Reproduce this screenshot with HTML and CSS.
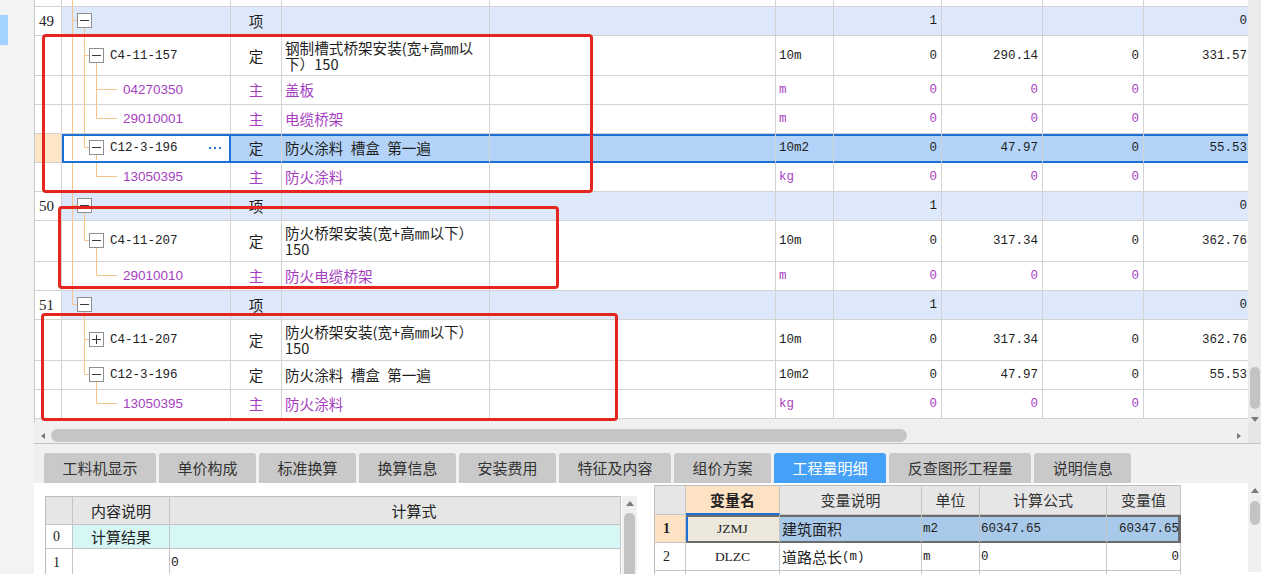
FILE: index.html
```html
<!DOCTYPE html>
<html lang="zh-CN">
<head>
<meta charset="utf-8">
<title>工程量明细</title>
<link rel="stylesheet" href="styles.css">
</head>
<body>
<div class="app">
  <aside class="side"><div class="side-sel"></div></aside>
  <main class="main">
    <section class="upper">
      <div class="grid">
        <div class="row part">
          <div class="rn"></div>
          <div class="tc"><svg class="tree" width="32" height="6"><path d="M10.5 0V7"/></svg></div>
          <div></div><div></div><div></div><div></div><div></div><div></div><div></div><div></div>
        </div>

        <div class="row grp">
          <div class="rn">49</div>
          <div class="tc"><svg class="tree" width="32" height="28"><path d="M10.5 0V29M10.5 13.5H15M22.5 21V29"/><rect x="15.5" y="6.5" width="14" height="14"/><path class="sg" d="M18 13.5H27"/></svg></div>
          <div class="ty">项</div><div class="nm"></div><div></div><div class="un"></div>
          <div class="v">1</div><div class="v"></div><div class="v"></div><div class="v">0</div>
        </div>

        <div class="row tall">
          <div class="rn"></div>
          <div class="tc"><svg class="tree" width="47" height="39"><path d="M10.5 0V40M22.5 0V40M22.5 19.5H27M34.5 27V40"/><rect x="27.5" y="12.5" width="14" height="14"/><path class="sg" d="M30 19.5H39"/></svg><span class="code">C4-11-157</span></div>
          <div class="ty">定</div>
          <div class="nm two"><span class="ln">钢制槽式桥架安装(宽+高㎜以</span><span class="ln">下）150</span></div>
          <div></div><div class="un">10m</div>
          <div class="v">0</div><div class="v">290.14</div><div class="v">0</div><div class="v">331.57</div>
        </div>

        <div class="row pr">
          <div class="rn"></div>
          <div class="tc"><svg class="tree" width="59" height="28"><path d="M10.5 0V29M22.5 0V29M34.5 0V29M34.5 13.5H55"/></svg><span class="mcode">04270350</span></div>
          <div class="ty">主</div><div class="nm">盖板</div><div></div><div class="un">m</div>
          <div class="v">0</div><div class="v">0</div><div class="v">0</div><div class="v"></div>
        </div>

        <div class="row pr">
          <div class="rn"></div>
          <div class="tc"><svg class="tree" width="59" height="28"><path d="M10.5 0V29M22.5 0V29M34.5 0V13.5H55"/></svg><span class="mcode">29010001</span></div>
          <div class="ty">主</div><div class="nm">电缆桥架</div><div></div><div class="un">m</div>
          <div class="v">0</div><div class="v">0</div><div class="v">0</div><div class="v"></div>
        </div>

        <div class="row sel">
          <div class="rn"></div>
          <div class="tc"><svg class="tree" width="47" height="28"><path d="M10.5 2V26M22.5 2V13.5H27M34.5 21V26"/><rect x="27.5" y="6.5" width="14" height="14"/><path class="sg" d="M30 13.5H39"/></svg><span class="code">C12-3-196</span><svg class="dots" width="12" height="3"><rect x="0" y="0" width="2" height="2"/><rect x="5" y="0" width="2" height="2"/><rect x="10" y="0" width="2" height="2"/></svg></div>
          <div class="ty">定</div><div class="nm">防火涂料&ensp;槽盒&ensp;第一遍</div><div></div><div class="un">10m2</div>
          <div class="v">0</div><div class="v">47.97</div><div class="v">0</div><div class="v">55.53</div>
        </div>

        <div class="row pr">
          <div class="rn"></div>
          <div class="tc"><svg class="tree" width="59" height="28"><path d="M10.5 0V29M34.5 0V13.5H55"/></svg><span class="mcode">13050395</span></div>
          <div class="ty">主</div><div class="nm">防火涂料</div><div></div><div class="un">kg</div>
          <div class="v">0</div><div class="v">0</div><div class="v">0</div><div class="v"></div>
        </div>

        <div class="row grp">
          <div class="rn">50</div>
          <div class="tc"><svg class="tree" width="32" height="28"><path d="M10.5 0V29M10.5 13.5H15M22.5 21V29"/><rect x="15.5" y="6.5" width="14" height="14"/><path class="sg" d="M18 13.5H27"/></svg></div>
          <div class="ty">项</div><div class="nm"></div><div></div><div class="un"></div>
          <div class="v">1</div><div class="v"></div><div class="v"></div><div class="v">0</div>
        </div>

        <div class="row tall41">
          <div class="rn"></div>
          <div class="tc"><svg class="tree" width="47" height="40"><path d="M10.5 0V41M22.5 0V19.5H27M34.5 27V41"/><rect x="27.5" y="12.5" width="14" height="14"/><path class="sg" d="M30 19.5H39"/></svg><span class="code">C4-11-207</span></div>
          <div class="ty">定</div>
          <div class="nm two"><span class="ln">防火桥架安装(宽+高㎜以下）</span><span class="ln">150</span></div>
          <div></div><div class="un">10m</div>
          <div class="v">0</div><div class="v">317.34</div><div class="v">0</div><div class="v">362.76</div>
        </div>

        <div class="row pr">
          <div class="rn"></div>
          <div class="tc"><svg class="tree" width="59" height="28"><path d="M10.5 0V29M34.5 0V13.5H55"/></svg><span class="mcode">29010010</span></div>
          <div class="ty">主</div><div class="nm">防火电缆桥架</div><div></div><div class="un">m</div>
          <div class="v">0</div><div class="v">0</div><div class="v">0</div><div class="v"></div>
        </div>

        <div class="row grp">
          <div class="rn">51</div>
          <div class="tc"><svg class="tree" width="32" height="28"><path d="M10.5 0V13.5H15M22.5 21V29"/><rect x="15.5" y="6.5" width="14" height="14"/><path class="sg" d="M18 13.5H27"/></svg></div>
          <div class="ty">项</div><div class="nm"></div><div></div><div class="un"></div>
          <div class="v">1</div><div class="v"></div><div class="v"></div><div class="v">0</div>
        </div>

        <div class="row tall41">
          <div class="rn"></div>
          <div class="tc"><svg class="tree" width="47" height="40"><path d="M22.5 0V41M22.5 19.5H27"/><rect x="27.5" y="12.5" width="14" height="14"/><path class="sg" d="M30 19.5H39M34.5 15V24"/></svg><span class="code">C4-11-207</span></div>
          <div class="ty">定</div>
          <div class="nm two"><span class="ln">防火桥架安装(宽+高㎜以下）</span><span class="ln">150</span></div>
          <div></div><div class="un">10m</div>
          <div class="v">0</div><div class="v">317.34</div><div class="v">0</div><div class="v">362.76</div>
        </div>

        <div class="row">
          <div class="rn"></div>
          <div class="tc"><svg class="tree" width="47" height="28"><path d="M22.5 0V13.5H27M34.5 21V29"/><rect x="27.5" y="6.5" width="14" height="14"/><path class="sg" d="M30 13.5H39"/></svg><span class="code">C12-3-196</span></div>
          <div class="ty">定</div><div class="nm">防火涂料&ensp;槽盒&ensp;第一遍</div><div></div><div class="un">10m2</div>
          <div class="v">0</div><div class="v">47.97</div><div class="v">0</div><div class="v">55.53</div>
        </div>

        <div class="row pr">
          <div class="rn"></div>
          <div class="tc"><svg class="tree" width="59" height="28"><path d="M34.5 0V13.5H55"/></svg><span class="mcode">13050395</span></div>
          <div class="ty">主</div><div class="nm">防火涂料</div><div></div><div class="un">kg</div>
          <div class="v">0</div><div class="v">0</div><div class="v">0</div><div class="v"></div>
        </div>

        <div class="grid-fill"></div>
      </div>
      <div class="vscroll"><div class="vthumb"></div><div class="arr-down"></div></div>
    </section>

    <div class="hscroll">
      <div class="htrack"><span class="arr-left"></span><span class="hthumb"></span><span class="arr-right"></span></div>
      <div class="hcorner"></div>
    </div>

    <nav class="tabs">
      <span class="tab">工料机显示</span>
      <span class="tab">单价构成</span>
      <span class="tab">标准换算</span>
      <span class="tab">换算信息</span>
      <span class="tab">安装费用</span>
      <span class="tab">特征及内容</span>
      <span class="tab">组价方案</span>
      <span class="tab active">工程量明细</span>
      <span class="tab">反查图形工程量</span>
      <span class="tab">说明信息</span>
    </nav>

    <section class="lower">
      <div class="lpanel">
        <div class="ltable">
          <div class="lrow lhd"><div></div><div class="c">内容说明</div><div class="c calc">计算式</div></div>
          <div class="lrow lr0"><div class="lrn">0</div><div class="c">计算结果</div><div></div></div>
          <div class="lrow lr1"><div class="lrn">1</div><div></div><div class="lv">0</div></div>
        </div>
        <div class="lscroll"><span class="arr-up"></span><span class="lthumb"></span></div>
      </div>

      <div class="rtable">
        <div class="rrow rhd"><div></div><div class="c vh">变量名</div><div class="c">变量说明</div><div class="c">单位</div><div class="c">计算公式</div><div class="c">变量值</div></div>
        <div class="rrow rsel"><div class="rrn b">1</div><div class="c vn">JZMJ</div><div class="t">建筑面积</div><div class="m">m2</div><div class="m">60347.65</div><div class="m r">60347.65</div></div>
        <div class="rrow"><div class="rrn">2</div><div class="c vn2">DLZC</div><div class="t">道路总长<span class="paren">(m)</span></div><div class="m">m</div><div class="m">0</div><div class="m r">0</div></div>
        <div class="rrow"><div></div><div></div><div></div><div></div><div></div><div></div></div>
      </div>
      <div class="rfill"></div>
      <div class="rscroll"><span class="arr-up"></span><span class="rthumb"></span></div>
    </section>
  </main>

  <div class="anno a1"></div>
  <div class="anno a2"></div>
  <div class="anno a3"></div>
</div>
</body>
</html>
```

FILE: styles.css
```css
* { box-sizing: border-box; margin: 0; padding: 0; }
html, body { width: 1261px; height: 574px; overflow: hidden; background: #fff; }
body { font-family: "Noto Sans CJK SC", "Noto Sans", sans-serif; font-size: 14.6px; color: #1e1e1e; }

.app { position: relative; display: flex; width: 1261px; height: 574px; }

.side { width: 34px; flex: none; background: #f3f3f3; padding-top: 15px; }
.side-sel { width: 8px; height: 30px; background: #a3d2ff; }

.main { flex: 1; display: flex; flex-direction: column; min-width: 0; }

/* ---------- upper grid ---------- */
.upper { display: flex; height: 423px; flex: none; }
.grid { width: 1214px; flex: none; border-left: 1px solid #c9c9c9; display: flex; flex-direction: column; background: #f0f0f0; }
.grid-fill { flex: 1; }

.row {
  display: grid;
  grid-template-columns: 27px 169px 51px 208px 286px 58px 108px 101px 101px 104px;
  height: 29px; flex: none; background: #fff;
}
.row > div {
  border-right: 1px solid #d3d3d3; border-bottom: 1px solid #d3d3d3;
  display: flex; align-items: center; overflow: hidden; white-space: nowrap; line-height: 16px;
}
.row > div:last-child { border-right: none; padding-right: 1px; }
.row.part { height: 7px; }
.row.tall { height: 40px; }
.row.tall41 { height: 41px; }
.row.grp { background: #dde9fa; }
.row.grp > .rn { background: #fff; }

.rn { padding-left: 4px; font-family: "Liberation Serif", serif; font-size: 15px; color: #222; }
.tc { align-items: stretch !important; overflow: visible !important; }
.tree { display: block; flex: none; overflow: visible; }
.tree path { fill: none; stroke: #f5c48a; stroke-width: 1; }
.tree rect { fill: #fff; stroke: #8f8f8f; stroke-width: 1; }
.tree path.sg { stroke: #3a3a3a; }
.code { align-self: center; margin-left: 1px; font-family: "Liberation Mono", monospace; font-size: 12.5px; color: #222; }
.mcode { align-self: center; margin-left: 2px; font-family: "Liberation Sans", sans-serif; font-size: 13.5px; color: #a63fbf; }
.dots { align-self: center; margin-left: auto; margin-right: 9px; flex: none; }
.dots rect { fill: #2b7bd9; }

.ty { justify-content: center; }
.nm { padding-left: 3px; }
.nm.two { flex-direction: column; align-items: flex-start !important; justify-content: center; }
.nm.two .ln { display: block; height: 16px; line-height: 16px; }
.un { padding-left: 3px; font-family: "Liberation Mono", monospace; font-size: 12.5px; }
.v { justify-content: flex-end; padding-right: 4px; font-family: "Liberation Mono", monospace; font-size: 12.5px; }

.row.pr > .ty, .row.pr > .nm, .row.pr > .un, .row.pr > .v { color: #a63fbf; }

.row.sel > div { background: #b3d4f8; box-shadow: inset 0 2px #1d6fd8, inset 0 -1px #1d6fd8; border-bottom-color: #1d6fd8; }
.row.sel > .rn { background: #fde5c8; box-shadow: none; border-bottom-color: #d3d3d3; }
.row.sel > .tc { background: #fff; border-right-color: #1d6fd8; box-shadow: inset 0 2px #1d6fd8, inset 0 -1px #1d6fd8, inset 2px 0 #1d6fd8, inset -1px 0 #1d6fd8; }

.vscroll { width: 13px; flex: none; background: #ebebeb; display: flex; flex-direction: column; align-items: center; padding-top: 367px; }
.vthumb { width: 10px; height: 42px; border-radius: 5px; background: #c3c3c3; }
.arr-down { margin-top: 8px; width: 0; height: 0; border-left: 4px solid transparent; border-right: 4px solid transparent; border-top: 5px solid #7a7a7a; }

/* ---------- horizontal scrollbar ---------- */
.hscroll { display: flex; height: 20px; flex: none; }
.htrack { flex: 1; display: flex; align-items: center; padding-top: 5px; background: #f0f0f0; }
.arr-left { margin-left: 7px; width: 0; height: 0; border-top: 3px solid transparent; border-bottom: 3px solid transparent; border-right: 4px solid #7a7a7a; }
.hthumb { margin-left: 6px; width: 856px; height: 13px; border-radius: 7px; background: #c5c5c5; }
.arr-right { margin-left: auto; margin-right: 7px; width: 0; height: 0; border-top: 3px solid transparent; border-bottom: 3px solid transparent; border-left: 4px solid #7a7a7a; }
.hcorner { width: 13px; flex: none; background: #e6e6e6; }

/* ---------- tabs ---------- */
.tabs { display: flex; gap: 3px; height: 40px; flex: none; padding: 9px 0 0 10px; border-top: 1px solid #c3c3c3; background: #f0f0f0; }
.tab { height: 30px; line-height: 30px; padding: 0 18.5px; background: #c9c9c9; color: #333; font-size: 15px; border-radius: 3px 3px 0 0; white-space: nowrap; }
.tab.active { background: #45a1f7; color: #fff; }

/* ---------- lower panels ---------- */
.lower { flex: 1; min-height: 0; display: flex; align-items: flex-start; padding-top: 2px; background: #fff; overflow: hidden; font-size: 15px; color: #222; }

.lpanel { display: flex; margin-left: 11px; margin-top: 11px; }
.ltable { width: 576px; border-left: 1px solid #bdbdbd; border-top: 1px solid #bdbdbd; }
.lrow { display: grid; grid-template-columns: 27px 97px 451px; height: 28px; }
.lrow > div { border-right: 1px solid #c4c4c4; border-bottom: 1px solid #c4c4c4; display: flex; align-items: center; white-space: nowrap; overflow: hidden; line-height: 18px; }
.lrow.lr0 { height: 24px; }
.lhd > div { background: #e6e6e6; }
.lr0 > div { background: #d7f6f6; }
.lr0 > .lrn { background: #fff; }
.lrn { padding-left: 7px; font-family: "Liberation Serif", serif; font-size: 14px; }
.c { justify-content: center; }
.lhd .calc { padding-left: 38px; }
.lv { padding-left: 1px; font-family: "Liberation Mono", monospace; font-size: 13px; }

.lscroll { width: 15px; height: 90px; margin-left: 1px; background: #f0f0f0; display: flex; flex-direction: column; align-items: center; padding-top: 5px; }
.arr-up { width: 0; height: 0; border-left: 4px solid transparent; border-right: 4px solid transparent; border-bottom: 5px solid #7a7a7a; flex: none; }
.lthumb { margin-top: 7px; width: 11px; height: 80px; border-radius: 5px; background: #c3c3c3; }

.rtable { width: 527px; flex: none; margin-left: 17px; border-left: 1px solid #bdbdbd; border-top: 1px solid #bdbdbd; }
.rrow { display: grid; grid-template-columns: 31px 94px 142px 58px 127px 74px; height: 28px; }
.rrow > div { border-right: 1px solid #c4c4c4; border-bottom: 1px solid #c4c4c4; display: flex; align-items: center; white-space: nowrap; overflow: hidden; line-height: 18px; }
.rrow.rhd { height: 29px; }
.rhd > div { background: #e6e6e6; color: #333; }
.rhd > .vh { background: #fde3c3; font-weight: 700; color: #222; border-bottom: 2px solid #1d6fd8; }
.rrn { padding-left: 8px; font-family: "Liberation Serif", serif; font-size: 14px; }
.rrn.b { font-weight: 700; }
.t { padding-left: 2px; }
.paren { font-family: "Liberation Mono", monospace; font-size: 12.5px; }
.m { padding-left: 1px; font-family: "Liberation Mono", monospace; font-size: 12.5px; }
.m.r { justify-content: flex-end; padding-right: 1px; padding-left: 0; }
.vn, .vn2 { font-family: "Liberation Serif", serif; font-size: 13.5px; }

.rsel > div { background: #a9c9ea; box-shadow: inset 0 2px #6b6b6b, inset 0 -1px #6b6b6b; border-bottom-color: #6b6b6b; }
.rsel > .rrn { background: #fde3c3; box-shadow: none; border-bottom-color: #c4c4c4; }
.rsel > .vn { background: #ece9dc; box-shadow: inset 0 2px #6b6b6b, inset 0 -1px #6b6b6b, inset 2px 0 #1d6fd8; }
.rsel > div:last-child { border-right-color: #6b6b6b; box-shadow: inset 0 2px #6b6b6b, inset 0 -1px #6b6b6b, inset -2px 0 #6b6b6b; }

.rfill { flex: 1; }
.rscroll { width: 13px; flex: none; height: 100%; margin-top: -2px; background: #f0f0f0; display: flex; flex-direction: column; align-items: center; padding-top: 5px; }
.rthumb { margin-top: 8px; width: 10px; height: 24px; border-radius: 5px; background: #c3c3c3; }

/* ---------- red annotation boxes (overlay) ---------- */
.anno { position: absolute; border: 3px solid #e52620; border-radius: 4px; pointer-events: none; }
.a1 { left: 42px; top: 34px; width: 551px; height: 159px; }
.a2 { left: 58px; top: 206px; width: 501px; height: 83px; }
.a3 { left: 41px; top: 313px; width: 577px; height: 108px; }
```
